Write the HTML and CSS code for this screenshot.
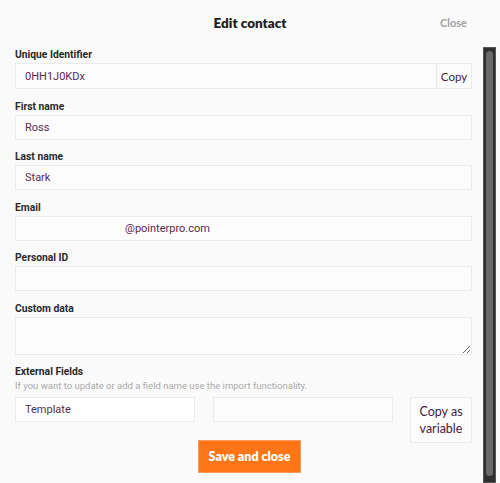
FILE: index.html
```html
<!DOCTYPE html>
<html>
<head>
<meta charset="utf-8">
<link rel="stylesheet" href="styles.css">
</head>
<body>
<div class="modal">
  <header class="head">
    <span></span>
    <h1 class="title">Edit contact</h1>
    <a class="close">Close</a>
  </header>
  <div class="body">
    <form class="form">
      <div class="field">
        <label class="label">Unique Identifier</label>
        <div class="group">
          <input class="input" value="0HH1J0KDx">
          <button type="button" class="copy">Copy</button>
        </div>
      </div>
      <div class="field">
        <label class="label">First name</label>
        <input class="input" value="Ross">
      </div>
      <div class="field">
        <label class="label">Last name</label>
        <input class="input" value="Stark">
      </div>
      <div class="field">
        <label class="label">Email</label>
        <input class="input redacted" value="@pointerpro.com">
      </div>
      <div class="field">
        <label class="label">Personal ID</label>
        <input class="input" value="">
      </div>
      <div class="field">
        <label class="label">Custom data</label>
        <textarea class="input area"></textarea>
      </div>
      <div class="ext">
        <label class="label">External Fields</label>
        <p class="help">If you want to update or add a field name use the import functionality.</p>
        <div class="row">
          <input class="input white" value="Template">
          <input class="input" value="">
          <button type="button" class="varbtn">Copy as variable</button>
        </div>
      </div>
      <div class="actions">
        <button type="button" class="save">Save and close</button>
      </div>
    </form>
    <div class="scrollbar"><div class="thumb"></div></div>
  </div>
</div>
</body>
</html>
```

FILE: styles.css
```css
html, body {
  margin: 0;
  padding: 0;
  background: #fafafa;
}
body {
  width: 500px;
  height: 483px;
  overflow: hidden;
  font-family: Roboto, "Liberation Sans", sans-serif;
}
.modal {
  display: flex;
  flex-direction: column;
  height: 483px;
}
.head {
  display: grid;
  grid-template-columns: 1fr auto 1fr;
  align-items: center;
  height: 45px;
  margin-bottom: 3px;
}
.title {
  margin: 0;
  font-family: Lato, "Liberation Sans", sans-serif;
  font-weight: 800;
  font-size: 13.5px;
  color: #1f1f1f;
}
.close {
  justify-self: end;
  margin-right: 33px;
  font-family: Lato, "Liberation Sans", sans-serif;
  font-weight: 700;
  font-size: 11px;
  color: #a3a3a3;
}
.body {
  flex: 1;
  display: flex;
  min-height: 0;
}
.form {
  margin: 0 0 0 15px;
  width: 457px;
  display: flex;
  flex-direction: column;
}
.field {
  display: flex;
  flex-direction: column;
  margin-bottom: 10.5px;
}
.label {
  display: block;
  font-size: 10.3px;
  line-height: 14px;
  font-weight: 700;
  color: #2a2a2a;
  margin: 0 0 1px;
}
.input {
  box-sizing: border-box;
  height: 25px;
  width: 100%;
  margin: 0;
  border: 1px solid #ececec;
  background: #fcfcfc;
  padding: 0 9px;
  font-family: Roboto, "Liberation Sans", sans-serif;
  font-size: 11px;
  color: #5a2b4d;
  outline: none;
}
.group {
  display: flex;
  height: 26px;
  border: 1px solid #ececec;
  background: #fcfcfc;
  box-sizing: border-box;
}
.group .input {
  border: 0;
  height: 24px;
  flex: 1;
}
.copy {
  border: 0;
  border-left: 1px solid #ececec;
  background: transparent;
  width: 35px;
  padding: 0;
  font-family: Lato, "Liberation Sans", sans-serif;
  font-size: 11.5px;
  color: #4a2140;
}
.redacted {
  padding-left: 109px;
}
.area {
  height: 38px;
  resize: vertical;
  padding-top: 6px;
}
.ext {
  display: flex;
  flex-direction: column;
}
.ext .label {
  margin: 0;
}
.help {
  margin: 0 0 4px;
  font-size: 9.5px;
  line-height: 14px;
  color: #aaa;
}
.row {
  display: grid;
  grid-template-columns: 180px 180px 62px;
  justify-content: space-between;
  align-items: start;
}
.white {
  background: #fff;
}
.varbtn {
  height: 46px;
  border: 1px solid #ececec;
  background: #fcfcfc;
  padding: 0 4px;
  font-family: Lato, "Liberation Sans", sans-serif;
  font-size: 12.5px;
  line-height: 17px;
  color: #4a2140;
}
.actions {
  display: flex;
  justify-content: center;
  margin-top: -3px;
  padding-left: 12px;
}
.save {
  width: 103px;
  height: 33px;
  border: 1px solid #fb9d5e;
  background: #fd7517;
  color: #fff;
  font-family: Lato, "Liberation Sans", sans-serif;
  font-weight: 800;
  font-size: 12.5px;
}
.scrollbar {
  box-sizing: border-box;
  margin-left: 11px;
  margin-top: -1px;
  width: 13px;
  background: #2f2f2f;
  border: 1px solid #555;
  padding: 3px 2px 6px;
  display: flex;
}
.thumb {
  flex: 1;
  background: #6a6a6a;
  border-radius: 4px;
}
```
